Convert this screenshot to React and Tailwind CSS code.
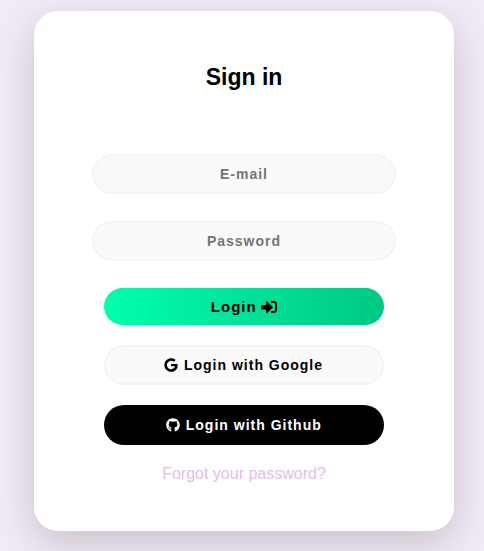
import { FaSignInAlt, FaGoogle, FaGithub } from "react-icons/fa";

const field =
  "h-10 w-[304px] rounded-[20px] border-2 border-[#f4f4f4] bg-[#fafafa] text-center text-sm font-bold tracking-[1px] text-black outline-none placeholder:text-[#757575]";
const button =
  "flex w-[280px] items-center justify-center rounded-[20px] font-bold tracking-[1px]";

export default function App() {
  return (
    <div className="flex h-[551px] w-[484px] flex-col items-center overflow-hidden bg-[#f3eaf7] pt-[11px] font-['Liberation_Sans',Arial,sans-serif]">
      <form className="ml-1 flex h-[520px] w-[420px] shrink-0 flex-col items-center rounded-[24px] bg-white shadow-[0_12px_38px_rgba(0,0,0,0.18)]">
        <h1 className="mt-[51px] text-[23px] leading-[30px] font-bold text-black">Sign in</h1>
        <input type="email" placeholder="E-mail" className={`mt-[62px] ${field}`} />
        <input type="password" placeholder="Password" className={`mt-[27px] ${field}`} />
        <button type="button" className={`mt-[27px] h-[37px] bg-linear-to-r from-[#00ffae] to-[#00c886] pt-px text-[15px] text-black ${button}`}>
          Login
          <FaSignInAlt className="ml-[4.5px] size-4" />
        </button>
        <button type="button" className={`mt-5 h-10 border-2 border-[#f4f4f4] bg-[#fafafa] text-sm text-black ${button}`}>
          <FaGoogle className="mr-[5.5px] -ml-[0.5px]" />
          Login with Google
        </button>
        <button type="button" className={`mt-5 h-10 bg-black text-sm text-white ${button}`}>
          <FaGithub className="mr-1.5 -ml-[0.5px]" />
          Login with Github
        </button>
        <a href="#" className="mt-[17px] text-base text-[#e3bceb]">Forgot your password?</a>
      </form>
    </div>
  );
}
